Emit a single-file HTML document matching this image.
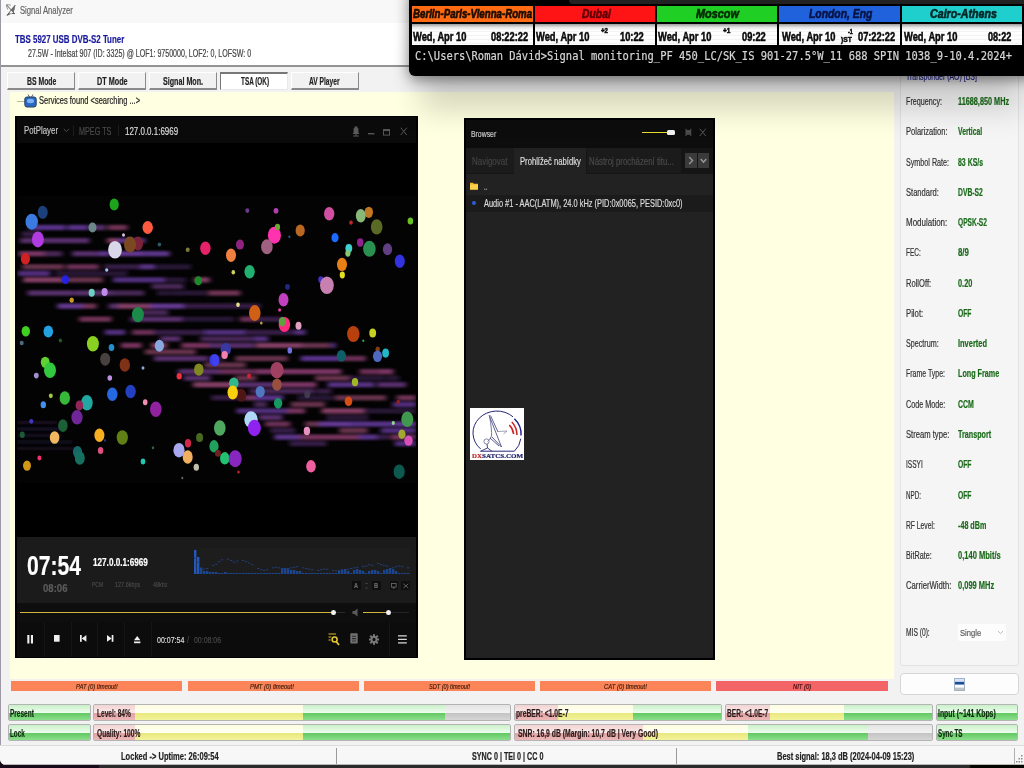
<!DOCTYPE html>
<html lang="en"><head><meta charset="utf-8"><title>Signal Analyzer</title>
<style>

*{box-sizing:border-box;margin:0;padding:0}
html,body{width:1024px;height:768px;overflow:hidden;background:#000}
body{background:linear-gradient(90deg,#170b19 0,#170b19 98px,#2b2b2b 100px,#2b2b2b 969px,#050500 971px,#050500 100%)}
body{position:relative;font-family:"Liberation Sans","DejaVu Sans",sans-serif;}
.a{position:absolute}
.t{position:absolute;white-space:nowrap;transform-origin:0 50%;display:inline-block;-webkit-text-stroke:0.2px}
#win{left:0;top:0;width:1024px;height:765px;background:#f2f2f2;border-radius:0 0 0 6px;overflow:hidden}
.tab{height:18px;top:72px;background:#f1f1f1;border:1px solid #fff;border-right-color:#8a8a8a;border-bottom:2px solid #8a8a8a}
.tab.on{background:#fff;border:1px solid #777;border-right-color:#e8e8e8;border-bottom:1px solid #e8e8e8;border-top-width:2px}
.obar{top:681px;height:10px;background:#fb8558}
.pb{height:17px;border:1px solid #b4b4b4;border-radius:2px;overflow:hidden;background:#e6e6e6}
.pb i{position:absolute;top:0;bottom:0;display:block}
.g{background:linear-gradient(#c9f1c9 0,#eefcee 52%,#63c963 56%,#8ddf8d 100%)}
.y{background:linear-gradient(#fdfde0 0,#fffff4 52%,#e9e97e 56%,#f3f39d 100%)}
.p{background:linear-gradient(#f3d3d3 0,#fbeaea 52%,#e2a2a2 56%,#ecb9b9 100%)}
.s{background:linear-gradient(#e4e4e4 0,#f2f2f2 52%,#c4c4c4 56%,#d6d6d6 100%)}

</style></head>
<body>

<div id="win" class="a">
  <div class="a" style="left:0;top:0;width:1024px;height:23px;background:#f8f8f9"></div>
  <div class="a" style="left:0;top:23px;width:1024px;height:43px;background:#fff"></div>
  <div class="a" style="left:0;top:65px;width:1024px;height:2px;background:#939393"></div>
  <div class="a" style="left:0;top:0;width:1px;height:765px;background:#9d97a6"></div>
  <!-- app icon -->
  <svg class="a" style="left:6px;top:3.5px" width="10" height="12" viewBox="0 0 10 12"><path d="M0.5 0.8 L8.8 9.8 M9.3 1 L1 11.3" stroke="#5c5c5c" stroke-width="1" fill="none"/><path d="M9.3 1 L5 5.6 L7.6 8.6 Q9 5 9.3 1Z" fill="#6a6a6a"/><path d="M0.5 0.8 Q2.5 0.5 4.8 1.2 M0.5 0.8 Q0.6 3.5 1.8 5.5" stroke="#777" stroke-width="0.8" fill="none"/><path d="M1 11.3 L4.5 9.6 M5.5 9.2 L8.8 9.8" stroke="#5c5c5c" stroke-width="1.1" fill="none"/></svg>
  <!-- tabs -->
  <div class="a tab" style="left:7.4px;width:68px"></div>
  <div class="a tab" style="left:78.4px;width:68px"></div>
  <div class="a tab" style="left:149.4px;width:68px"></div>
  <div class="a tab on" style="left:220.2px;width:68px"></div>
  <div class="a tab" style="left:291.2px;width:68px"></div>
  <!-- yellow panel -->
  <div class="a" style="left:9.5px;top:91.5px;width:884px;height:587px;background:#ffffe1"></div>
  <!-- tree icon -->
  <div class="a" style="left:17px;top:101px;width:8px;height:1px;background:#b9b9a0"></div>
  <svg class="a" style="left:24px;top:94px" width="13" height="14" viewBox="0 0 13 14"><path d="M4 0.5 L5.5 3 M9 0.5 L7.5 3" stroke="#567" stroke-width="1"/><rect x="0.8" y="3" width="11.4" height="10" rx="2.2" fill="#2a66c2" stroke="#26405f" stroke-width="1"/><ellipse cx="6.5" cy="7" rx="3.6" ry="2.2" fill="#7db4f2"/></svg>

  <!-- table status bars -->
  <div class="a obar" style="left:11px;width:171px"></div>
  <div class="a obar" style="left:187.5px;width:171px"></div>
  <div class="a obar" style="left:363.5px;width:171.5px"></div>
  <div class="a obar" style="left:540px;width:171px"></div>
  <div class="a obar" style="left:716px;width:172px;background:#f26465"></div>
<div class="a pb" style="left:8px;top:704px;width:82.5px"><i class="g" style="left:-1.0px;width:83.0px"></i></div>
<div class="a pb" style="left:8px;top:724px;width:82.5px"><i class="g" style="left:-1.0px;width:83.0px"></i></div>
<div class="a pb" style="left:93px;top:704px;width:418px"><i class="p" style="left:-1.0px;width:42.0px"></i><i class="y" style="left:41.0px;width:168.0px"></i><i class="g" style="left:209.0px;width:142.0px"></i><i class="s" style="left:351.0px;width:67.0px"></i></div>
<div class="a pb" style="left:93px;top:724px;width:418px"><i class="p" style="left:-1.0px;width:42.0px"></i><i class="y" style="left:41.0px;width:168.0px"></i><i class="g" style="left:209.0px;width:209.0px"></i></div>
<div class="a pb" style="left:514px;top:704px;width:208px"><i class="p" style="left:-1.0px;width:44.0px"></i><i class="y" style="left:43.0px;width:74.5px"></i><i class="g" style="left:117.5px;width:90.5px"></i></div>
<div class="a pb" style="left:724.5px;top:704px;width:208px"><i class="p" style="left:-1.5px;width:46.0px"></i><i class="y" style="left:44.5px;width:74.0px"></i><i class="g" style="left:118.5px;width:89.0px"></i></div>
<div class="a pb" style="left:514px;top:724px;width:418.5px"><i class="p" style="left:-1.0px;width:129.0px"></i><i class="y" style="left:128.0px;width:105.0px"></i><i class="g" style="left:233.0px;width:120.0px"></i><i class="s" style="left:353.0px;width:65.0px"></i></div>
<div class="a pb" style="left:935.5px;top:704px;width:82.5px"><i class="g" style="left:-1.5px;width:84.0px"></i></div>
<div class="a pb" style="left:935.5px;top:724px;width:82.5px"><i class="g" style="left:-1.5px;width:84.0px"></i></div>

  <!-- status bar -->
  <div class="a" style="left:0;top:745px;width:1024px;height:20px;background:#f7f7f7"></div>
  <div class="a" style="left:0;top:745px;width:1024px;height:1px;background:#dcdcdc"></div>
  <div class="a" style="left:0;top:764px;width:1024px;height:1px;background:#b8b8b8"></div>
  <div class="a" style="left:336px;top:748px;width:1px;height:16px;background:#9a9a9a"></div>
  <div class="a" style="left:676px;top:748px;width:1px;height:16px;background:#9a9a9a"></div>
  <div class="a" style="left:1014px;top:748px;width:1px;height:16px;background:#b0b0b0"></div>
  <svg class="a" style="left:1016px;top:755px" width="8" height="9" viewBox="0 0 8 9"><g fill="#8a8a8a"><rect x="5" y="0" width="1.5" height="1.5"/><rect x="2.5" y="3" width="1.5" height="1.5"/><rect x="5" y="3" width="1.5" height="1.5"/><rect x="0" y="6" width="1.5" height="1.5"/><rect x="2.5" y="6" width="1.5" height="1.5"/><rect x="5" y="6" width="1.5" height="1.5"/></g></svg>

  <div class="a" style="left:900px;top:74px;width:119px;height:592px;border:1px solid #e2e2e2;border-radius:3px;background:#f5f5f5"></div>
  <div class="a" style="left:900px;top:673px;width:119px;height:22px;border:1px solid #d6d6d6;border-radius:4px;background:#fdfdfd"></div>
  <svg class="a" style="left:954.3px;top:677.6px" width="11" height="13" viewBox="0 0 11 13"><rect x="0.5" y="0.5" width="10" height="12" fill="#fafcff" stroke="#9fb2c8"/><rect x="1" y="1" width="9" height="2.6" fill="#d5e4f6"/><rect x="1" y="3.8" width="9" height="2.2" fill="#1d4e94"/><rect x="1" y="6" width="9" height="1" fill="#6f9bd0"/><rect x="1" y="9.6" width="9" height="2.4" fill="#c2c2c2"/></svg>
  <div class="a" style="left:958px;top:624px;width:48px;height:16.5px;border-radius:2px;background:#fdfdfd"></div>
  <svg class="a" style="left:997px;top:630px" width="7" height="5" viewBox="0 0 7 5"><path d="M1 1 L3.5 3.6 L6 1" stroke="#b4b4b4" stroke-width="0.9" fill="none"/></svg>
<div class="a" id="pot" style="left:15px;top:116px;width:402.5px;height:542.3px;background:#000;overflow:hidden">
<div class="a" style="left:2px;top:1px;width:399px;height:26px;background:#0a0a0a"></div>
<svg class="a" style="left:2px;top:27px" width="399" height="393" viewBox="17 143 399 393">
<defs>
<linearGradient id="pg" x1="17" x2="415" y1="0" y2="0" gradientUnits="userSpaceOnUse">
<stop offset="0" stop-color="#4a2a50"/><stop offset=".08" stop-color="#5a3068"/><stop offset=".16" stop-color="#6a3350"/><stop offset=".24" stop-color="#553080"/>
<stop offset=".32" stop-color="#6e3058"/><stop offset=".4" stop-color="#5a3488"/><stop offset=".48" stop-color="#743458"/><stop offset=".56" stop-color="#5c3690"/>
<stop offset=".64" stop-color="#7a3560"/><stop offset=".72" stop-color="#603890"/><stop offset=".8" stop-color="#7e3868"/><stop offset=".9" stop-color="#683c98"/><stop offset="1" stop-color="#7a3a70"/>
</linearGradient>
<pattern id="ds" x="0" y="223" width="399" height="6.5" patternUnits="userSpaceOnUse"><rect x="0" y="3.2" width="399" height="3.3" fill="#040204"/><rect x="0" y="0" width="399" height="3.2" fill="#000" fill-opacity=".12"/></pattern>
<filter id="bl" x="-5%" y="-5%" width="110%" height="110%"><feGaussianBlur stdDeviation="2.6 1.1"/></filter>
<filter id="bb" x="-2%" y="-2%" width="104%" height="104%"><feGaussianBlur stdDeviation="0.45"/></filter>
<clipPath id="vc"><rect x="17" y="196" width="399" height="287"/></clipPath>
</defs>
<rect x="17" y="196" width="399" height="287" fill="#030303"/>
<g clip-path="url(#vc)">
<g filter="url(#bl)">
<rect x="29.6" y="224.9" width="36.1" height="5.2" fill="#583389"/><rect x="67.7" y="224.9" width="20.2" height="5.2" fill="#583389"/><rect x="89.4" y="224.9" width="16.0" height="5.2" fill="#562d6b"/><rect x="107.7" y="224.9" width="19.7" height="5.2" fill="#6e3154"/><rect x="21.9" y="231.5" width="18.8" height="5.2" fill="#361e44"/><rect x="20.3" y="238.0" width="35.7" height="5.2" fill="#562d6b"/><rect x="54.2" y="238.0" width="21.9" height="5.2" fill="#562d6b"/><rect x="72.8" y="238.0" width="16.6" height="5.2" fill="#562d6b"/><rect x="107.1" y="238.0" width="12.0" height="5.2" fill="#813d63"/><rect x="117.8" y="238.0" width="27.2" height="5.2" fill="#5b3589"/><rect x="18.7" y="251.1" width="29.0" height="5.2" fill="#783563"/><rect x="43.9" y="251.1" width="18.3" height="5.2" fill="#462654"/><rect x="72.2" y="251.1" width="24.7" height="5.2" fill="#562d6b"/><rect x="97.4" y="251.1" width="12.7" height="5.2" fill="#5b3589"/><rect x="112.7" y="251.1" width="32.8" height="5.2" fill="#633991"/><rect x="145.9" y="251.1" width="23.8" height="5.2" fill="#5b3589"/><rect x="22.3" y="264.2" width="41.7" height="5.2" fill="#65304c"/><rect x="66.4" y="264.2" width="32.4" height="5.2" fill="#692d54"/><rect x="104.2" y="264.2" width="39.4" height="5.2" fill="#361e44"/><rect x="140.5" y="264.2" width="15.1" height="5.2" fill="#563181"/><rect x="157.9" y="264.2" width="33.1" height="5.2" fill="#281635"/><rect x="17.7" y="270.8" width="32.4" height="5.2" fill="#512d7b"/><rect x="55.5" y="270.8" width="33.5" height="5.2" fill="#281635"/><rect x="89.1" y="270.8" width="38.2" height="5.2" fill="#281635"/><rect x="23.2" y="277.3" width="40.4" height="5.2" fill="#813d63"/><rect x="61.7" y="277.3" width="41.2" height="5.2" fill="#65304c"/><rect x="113.0" y="277.3" width="52.0" height="5.2" fill="#512d7b"/><rect x="165.7" y="277.3" width="20.5" height="5.2" fill="#281635"/><rect x="194.2" y="277.3" width="15.4" height="5.2" fill="#813d63"/><rect x="151.9" y="283.8" width="31.5" height="5.2" fill="#462654"/><rect x="27.5" y="290.4" width="46.3" height="5.2" fill="#562d6b"/><rect x="74.2" y="290.4" width="40.2" height="5.2" fill="#562d6b"/><rect x="111.7" y="290.4" width="32.4" height="5.2" fill="#462654"/><rect x="157.2" y="290.4" width="13.6" height="5.2" fill="#281635"/><rect x="171.6" y="290.4" width="34.4" height="5.2" fill="#281635"/><rect x="207.9" y="290.4" width="32.5" height="5.2" fill="#6e3154"/><rect x="57.5" y="303.5" width="25.8" height="5.2" fill="#633991"/><rect x="82.8" y="303.5" width="13.6" height="5.2" fill="#6e3154"/><rect x="108.7" y="303.5" width="13.2" height="5.2" fill="#562d6b"/><rect x="118.2" y="303.5" width="34.9" height="5.2" fill="#813d63"/><rect x="150.2" y="303.5" width="34.2" height="5.2" fill="#633991"/><rect x="183.5" y="303.5" width="49.8" height="5.2" fill="#361e44"/><rect x="230.9" y="303.5" width="29.6" height="5.2" fill="#361e44"/><rect x="138.4" y="310.0" width="29.7" height="5.2" fill="#462654"/><rect x="79.2" y="316.6" width="32.3" height="5.2" fill="#6e3154"/><rect x="130.6" y="316.6" width="51.6" height="5.2" fill="#562d6b"/><rect x="182.5" y="316.6" width="51.8" height="5.2" fill="#281635"/><rect x="239.8" y="316.6" width="18.7" height="5.2" fill="#692d54"/><rect x="257.0" y="316.6" width="25.9" height="5.2" fill="#361e44"/><rect x="104.8" y="329.7" width="20.4" height="5.2" fill="#512d7b"/><rect x="132.1" y="329.7" width="22.3" height="5.2" fill="#692d54"/><rect x="153.5" y="329.7" width="52.5" height="5.2" fill="#361e44"/><rect x="204.8" y="329.7" width="41.5" height="5.2" fill="#512d7b"/><rect x="244.7" y="329.7" width="47.3" height="5.2" fill="#361e44"/><rect x="293.3" y="329.7" width="12.3" height="5.2" fill="#512d7b"/><rect x="160.4" y="336.2" width="20.2" height="5.2" fill="#562d6b"/><rect x="200.4" y="336.2" width="51.9" height="5.2" fill="#462654"/><rect x="253.0" y="336.2" width="15.3" height="5.2" fill="#512d7b"/><rect x="121.1" y="342.8" width="20.4" height="5.2" fill="#74325b"/><rect x="151.3" y="342.8" width="15.6" height="5.2" fill="#813d63"/><rect x="181.4" y="342.8" width="29.4" height="5.2" fill="#74325b"/><rect x="209.2" y="342.8" width="44.8" height="5.2" fill="#562d6b"/><rect x="255.4" y="342.8" width="47.0" height="5.2" fill="#813d63"/><rect x="302.2" y="342.8" width="27.9" height="5.2" fill="#65304c"/><rect x="331.2" y="342.8" width="4.4" height="5.2" fill="#583389"/><rect x="144.9" y="349.3" width="50.8" height="5.2" fill="#65304c"/><rect x="154.0" y="355.9" width="53.6" height="5.2" fill="#562d6b"/><rect x="209.2" y="355.9" width="15.3" height="5.2" fill="#281635"/><rect x="235.3" y="355.9" width="52.4" height="5.2" fill="#65304c"/><rect x="300.8" y="355.9" width="37.7" height="5.2" fill="#583389"/><rect x="338.1" y="355.9" width="27.7" height="5.2" fill="#692d54"/><rect x="204.3" y="362.4" width="41.4" height="5.2" fill="#65304c"/><rect x="178.1" y="369.0" width="43.6" height="5.2" fill="#562d6b"/><rect x="219.8" y="369.0" width="33.8" height="5.2" fill="#692d54"/><rect x="254.4" y="369.0" width="36.3" height="5.2" fill="#783563"/><rect x="288.4" y="369.0" width="52.9" height="5.2" fill="#783563"/><rect x="359.5" y="369.0" width="13.7" height="5.2" fill="#692d54"/><rect x="369.4" y="369.0" width="13.6" height="5.2" fill="#692d54"/><rect x="379.6" y="369.0" width="13.7" height="5.2" fill="#783563"/><rect x="183.8" y="375.5" width="26.5" height="5.2" fill="#562d6b"/><rect x="235.0" y="375.5" width="21.2" height="5.2" fill="#65304c"/><rect x="315.1" y="375.5" width="37.0" height="5.2" fill="#65304c"/><rect x="348.7" y="375.5" width="36.3" height="5.2" fill="#281635"/><rect x="386.7" y="375.5" width="12.4" height="5.2" fill="#281635"/><rect x="193.0" y="382.1" width="44.9" height="5.2" fill="#813d63"/><rect x="236.4" y="382.1" width="43.2" height="5.2" fill="#562d6b"/><rect x="278.7" y="382.1" width="37.6" height="5.2" fill="#783563"/><rect x="327.8" y="382.1" width="46.5" height="5.2" fill="#563181"/><rect x="377.1" y="382.1" width="29.0" height="5.2" fill="#562d6b"/><rect x="249.7" y="388.6" width="49.9" height="5.2" fill="#462654"/><rect x="296.0" y="388.6" width="18.8" height="5.2" fill="#462654"/><rect x="316.5" y="388.6" width="14.8" height="5.2" fill="#361e44"/><rect x="211.3" y="395.2" width="33.2" height="5.2" fill="#361e44"/><rect x="244.8" y="395.2" width="14.0" height="5.2" fill="#783563"/><rect x="254.8" y="395.2" width="28.3" height="5.2" fill="#583389"/><rect x="297.7" y="395.2" width="34.5" height="5.2" fill="#281635"/><rect x="334.7" y="395.2" width="51.4" height="5.2" fill="#65304c"/><rect x="396.7" y="395.2" width="19.2" height="5.2" fill="#6e3154"/><rect x="254.1" y="401.8" width="12.7" height="5.2" fill="#462654"/><rect x="290.9" y="401.8" width="33.9" height="5.2" fill="#65304c"/><rect x="392.7" y="401.8" width="23.3" height="5.2" fill="#512d7b"/><rect x="236.5" y="408.3" width="53.2" height="5.2" fill="#512d7b"/><rect x="287.2" y="408.3" width="17.8" height="5.2" fill="#74325b"/><rect x="321.6" y="408.3" width="45.9" height="5.2" fill="#813d63"/><rect x="363.5" y="408.3" width="32.3" height="5.2" fill="#281635"/><rect x="394.8" y="408.3" width="21.2" height="5.2" fill="#281635"/><rect x="258.8" y="414.8" width="23.5" height="5.2" fill="#562d6b"/><rect x="326.5" y="414.8" width="41.8" height="5.2" fill="#281635"/><rect x="264.9" y="421.4" width="25.4" height="5.2" fill="#692d54"/><rect x="305.2" y="421.4" width="14.9" height="5.2" fill="#65304c"/><rect x="318.9" y="421.4" width="31.9" height="5.2" fill="#633991"/><rect x="349.9" y="421.4" width="49.1" height="5.2" fill="#583389"/><rect x="398.9" y="421.4" width="17.1" height="5.2" fill="#633991"/><rect x="270.3" y="427.9" width="24.5" height="5.2" fill="#361e44"/><rect x="339.3" y="427.9" width="28.2" height="5.2" fill="#65304c"/><rect x="380.9" y="427.9" width="35.1" height="5.2" fill="#512d7b"/><rect x="274.4" y="434.5" width="29.3" height="5.2" fill="#5b3589"/><rect x="300.4" y="434.5" width="13.4" height="5.2" fill="#6e3154"/><rect x="310.3" y="434.5" width="51.6" height="5.2" fill="#74325b"/><rect x="359.3" y="434.5" width="18.4" height="5.2" fill="#583389"/><rect x="376.6" y="434.5" width="12.7" height="5.2" fill="#361e44"/><rect x="390.8" y="434.5" width="22.5" height="5.2" fill="#74325b"/><rect x="411.6" y="434.5" width="4.4" height="5.2" fill="#562d6b"/><rect x="289.7" y="441.0" width="36.7" height="5.2" fill="#361e44"/><rect x="394.8" y="441.0" width="21.2" height="5.2" fill="#512d7b"/>
<rect x="17" y="421" width="40" height="3" fill="#1a1024"/><rect x="17" y="427.5" width="46" height="3" fill="#1c1228"/><rect x="17" y="434" width="44" height="3" fill="#181022"/><rect x="17" y="440.5" width="55" height="3" fill="#160e20"/><rect x="17" y="447" width="60" height="3" fill="#120a1a"/>
</g>
<g filter="url(#bb)"><ellipse cx="114.2" cy="204.6" rx="4.6" ry="6" fill="#1ea51e"/><ellipse cx="42.7" cy="212.3" rx="5" ry="6.5" fill="#1f3f7a"/><ellipse cx="31.7" cy="221.7" rx="6.2" ry="8" fill="#3a7ae0"/><ellipse cx="37.9" cy="239.4" rx="6" ry="8" fill="#b03ae0"/><ellipse cx="25.4" cy="258.8" rx="4.6" ry="5.8" fill="#d02020"/><ellipse cx="92.5" cy="227.5" rx="4" ry="5" fill="#6a8888"/><ellipse cx="147.7" cy="227.5" rx="5.2" ry="6.5" fill="#ff5a40"/><ellipse cx="123.5" cy="235" rx="1.5" ry="1.7" fill="#e0c0e0"/><ellipse cx="138" cy="243.5" rx="5" ry="7" fill="#7a2038"/><ellipse cx="130" cy="244.6" rx="6" ry="8" fill="#7a4a20"/><ellipse cx="115" cy="249.8" rx="6.9" ry="8.8" fill="#d8d8e8"/><ellipse cx="159.4" cy="244.6" rx="1.8" ry="2" fill="#2a5a6a"/><ellipse cx="187.7" cy="249.8" rx="2" ry="2.3" fill="#7a7a3a"/><ellipse cx="205.4" cy="248.3" rx="5.2" ry="6.7" fill="#e8206a"/><ellipse cx="106.7" cy="270" rx="1.6" ry="1.8" fill="#a0c8e8"/><ellipse cx="65.4" cy="279.6" rx="3.5" ry="4.4" fill="#2020e0"/><ellipse cx="198.3" cy="280.8" rx="3.8" ry="4.6" fill="#1a8a2a"/><ellipse cx="91.7" cy="292.7" rx="3.1" ry="4" fill="#6ad0c0"/><ellipse cx="104.6" cy="291.9" rx="3.1" ry="4" fill="#c08ae8"/><ellipse cx="71.7" cy="300.2" rx="2.2" ry="2.6" fill="#c89a20"/><ellipse cx="137.9" cy="314.6" rx="6" ry="7.7" fill="#1a8a4a"/><ellipse cx="25.8" cy="331.2" rx="4.2" ry="5.2" fill="#40d020"/><ellipse cx="48.3" cy="331.4" rx="4.8" ry="6" fill="#20a0e0"/><ellipse cx="247.3" cy="210.6" rx="2" ry="2.3" fill="#6a3a8a"/><ellipse cx="276" cy="210.8" rx="2.4" ry="2.8" fill="#b040b0"/><ellipse cx="329.2" cy="213.8" rx="5.2" ry="6.7" fill="#d050a0"/><ellipse cx="368.8" cy="212.3" rx="4.2" ry="5.6" fill="#c07820"/><ellipse cx="360.8" cy="215.8" rx="5" ry="6.7" fill="#88b878"/><ellipse cx="351" cy="222.7" rx="1.8" ry="2.1" fill="#c02828"/><ellipse cx="376.7" cy="226.9" rx="5.8" ry="7.7" fill="#5a6a28"/><ellipse cx="410.4" cy="221" rx="2.8" ry="3.5" fill="#68c020"/><ellipse cx="274.4" cy="235.2" rx="6.5" ry="8.5" fill="#ff30b0"/><ellipse cx="277.5" cy="227" rx="2.6" ry="3.2" fill="#68a830"/><ellipse cx="300.2" cy="230.6" rx="4.6" ry="6" fill="#b86820"/><ellipse cx="289.4" cy="236.7" rx="1" ry="1.2" fill="#2060a0"/><ellipse cx="335" cy="237.7" rx="3.6" ry="4.6" fill="#1a6aff"/><ellipse cx="240" cy="244.6" rx="4" ry="5" fill="#902080"/><ellipse cx="266.9" cy="246.7" rx="5.8" ry="7.5" fill="#a06080"/><ellipse cx="360.2" cy="242.5" rx="3.2" ry="4.2" fill="#902090"/><ellipse cx="348.8" cy="248.3" rx="3.4" ry="4.4" fill="#40d0d0"/><ellipse cx="347.9" cy="253.3" rx="2.6" ry="3.4" fill="#88c870"/><ellipse cx="369.4" cy="248.8" rx="6.3" ry="8" fill="#2a9050"/><ellipse cx="387.5" cy="249.2" rx="4.6" ry="6" fill="#604080"/><ellipse cx="399.8" cy="261.3" rx="5" ry="6.7" fill="#3030e0"/><ellipse cx="231" cy="255.2" rx="5" ry="6.7" fill="#f08040"/><ellipse cx="342" cy="264.4" rx="5" ry="6.7" fill="#e88018"/><ellipse cx="233.3" cy="272.3" rx="1.8" ry="2.2" fill="#d0d060"/><ellipse cx="249.6" cy="271.7" rx="5.2" ry="6.7" fill="#20b070"/><ellipse cx="342.3" cy="275" rx="2.6" ry="3.4" fill="#e0e020"/><ellipse cx="320.8" cy="279.6" rx="2.6" ry="3.4" fill="#4030c0"/><ellipse cx="326.9" cy="285.2" rx="6.9" ry="8.8" fill="#c880b0"/><ellipse cx="287.5" cy="286.9" rx="2.4" ry="2.8" fill="#202880"/><ellipse cx="283.5" cy="299.8" rx="5" ry="6.7" fill="#c040c0"/><ellipse cx="238" cy="304.8" rx="1.8" ry="2.2" fill="#e8e090"/><ellipse cx="279.6" cy="310" rx="1.5" ry="1.8" fill="#e040a0"/><ellipse cx="254.8" cy="313" rx="5.8" ry="7.9" fill="#d06018"/><ellipse cx="261.3" cy="323" rx="1.3" ry="1.6" fill="#c0a040"/><ellipse cx="284.4" cy="324.4" rx="5.8" ry="7.5" fill="#ff2a80"/><ellipse cx="282.3" cy="321.7" rx="3.5" ry="4.8" fill="#60a040"/><ellipse cx="298.5" cy="325.8" rx="3" ry="4" fill="#e0a0c0"/><ellipse cx="353.3" cy="334" rx="6.2" ry="8" fill="#b84010"/><ellipse cx="372.7" cy="333" rx="3.4" ry="4.6" fill="#c8d020"/><ellipse cx="21.7" cy="343" rx="2" ry="2.3" fill="#506880"/><ellipse cx="60.4" cy="340.4" rx="1.7" ry="2" fill="#205a28"/><ellipse cx="92.9" cy="343.8" rx="6" ry="7.7" fill="#88d020"/><ellipse cx="111.5" cy="347.5" rx="2.8" ry="3.5" fill="#2090d0"/><ellipse cx="159.4" cy="345.8" rx="4.6" ry="6" fill="#88a8e0"/><ellipse cx="105.2" cy="359.2" rx="5" ry="6.5" fill="#484040"/><ellipse cx="124.8" cy="365" rx="5.2" ry="6.7" fill="#803018"/><ellipse cx="143" cy="368" rx="1.5" ry="1.8" fill="#88a8d0"/><ellipse cx="214" cy="360.2" rx="4.6" ry="6.2" fill="#3838e0"/><ellipse cx="198.8" cy="369.6" rx="4.8" ry="6.2" fill="#808820"/><ellipse cx="179.2" cy="376.3" rx="2.6" ry="3.3" fill="#f03040"/><ellipse cx="45.2" cy="362.3" rx="4.4" ry="5.6" fill="#60d030"/><ellipse cx="50" cy="370.2" rx="6" ry="7.7" fill="#30c840"/><ellipse cx="36.3" cy="375.6" rx="2.4" ry="2.8" fill="#a090d0"/><ellipse cx="109.8" cy="378" rx="2.3" ry="2.8" fill="#c090e0"/><ellipse cx="112.3" cy="394.2" rx="5.2" ry="6.7" fill="#2868e0"/><ellipse cx="130.6" cy="391.5" rx="5.2" ry="6.7" fill="#2040c0"/><ellipse cx="50.8" cy="395.8" rx="2" ry="2.4" fill="#a0c840"/><ellipse cx="64.8" cy="398" rx="5.2" ry="6.7" fill="#38b838"/><ellipse cx="43.3" cy="404.8" rx="2.7" ry="3.5" fill="#4090f0"/><ellipse cx="86.9" cy="402.7" rx="5.8" ry="7.7" fill="#20a8a0"/><ellipse cx="79.4" cy="405.4" rx="3.8" ry="5" fill="#902858"/><ellipse cx="145.2" cy="402.3" rx="2.3" ry="3" fill="#f090b0"/><ellipse cx="155.8" cy="409.2" rx="5.8" ry="7.7" fill="#9020a0"/><ellipse cx="77" cy="417.3" rx="5.6" ry="7.3" fill="#702898"/><ellipse cx="31.3" cy="421.3" rx="2" ry="2.4" fill="#4038c0"/><ellipse cx="62.9" cy="425.6" rx="4.8" ry="6.3" fill="#1a6038"/><ellipse cx="22.3" cy="434.8" rx="2.5" ry="3.2" fill="#1a5a38"/><ellipse cx="54.6" cy="437.5" rx="4.8" ry="6.3" fill="#f0b860"/><ellipse cx="99.4" cy="435.2" rx="5" ry="6.7" fill="#f8b020"/><ellipse cx="122.3" cy="437.5" rx="5.6" ry="7.3" fill="#608018"/><ellipse cx="199.6" cy="437.5" rx="3.5" ry="4.6" fill="#486820"/><ellipse cx="188" cy="443.3" rx="3.1" ry="4.2" fill="#d02848"/><ellipse cx="214" cy="446.3" rx="4.6" ry="6.2" fill="#20a060"/><ellipse cx="179" cy="450.2" rx="5.6" ry="7.3" fill="#a8a8f0"/><ellipse cx="187.7" cy="457" rx="5" ry="6.7" fill="#f0b060"/><ellipse cx="196.3" cy="467.3" rx="2.7" ry="3.5" fill="#c0c0a8"/><ellipse cx="153" cy="447.7" rx="1.2" ry="1.5" fill="#2a6a3a"/><ellipse cx="100.6" cy="450.4" rx="2.7" ry="3.5" fill="#e05080"/><ellipse cx="77.5" cy="451.9" rx="4.6" ry="6" fill="#186868"/><ellipse cx="79.8" cy="458" rx="5" ry="6.7" fill="#187060"/><ellipse cx="39.4" cy="458" rx="2" ry="2.4" fill="#f03070"/><ellipse cx="27" cy="465.6" rx="4" ry="5.2" fill="#d09818"/><ellipse cx="143" cy="461.5" rx="2.3" ry="3" fill="#20c8b0"/><ellipse cx="182.3" cy="478" rx="1" ry="1.2" fill="#666"/><ellipse cx="105" cy="440.4" rx="1" ry="1.2" fill="#2838a0"/><ellipse cx="363.3" cy="340.8" rx="1.1" ry="1.3" fill="#30a050"/><ellipse cx="225.8" cy="349.2" rx="5.2" ry="6.2" fill="#3838a0"/><ellipse cx="224.6" cy="355" rx="3.2" ry="4" fill="#f080b0"/><ellipse cx="215.6" cy="360.2" rx="3.8" ry="6" fill="#4040f0"/><ellipse cx="289.8" cy="350.4" rx="2.3" ry="3.2" fill="#7070e0"/><ellipse cx="341.3" cy="355.8" rx="4.6" ry="5.8" fill="#106068"/><ellipse cx="377.7" cy="349.2" rx="2.2" ry="2.6" fill="#804018"/><ellipse cx="377.5" cy="356.3" rx="4.6" ry="5.8" fill="#5068c0"/><ellipse cx="385.6" cy="353.1" rx="3.4" ry="4.6" fill="#20b8c8"/><ellipse cx="277" cy="370.2" rx="6.6" ry="8.3" fill="#a04060"/><ellipse cx="276.9" cy="384.6" rx="4.8" ry="6.2" fill="#985040"/><ellipse cx="249" cy="376" rx="2" ry="2.4" fill="#d02030"/><ellipse cx="233.8" cy="383.1" rx="4.8" ry="5.5" fill="#30b888"/><ellipse cx="241" cy="395.2" rx="5.2" ry="6.5" fill="#501818"/><ellipse cx="232.7" cy="392.5" rx="5.2" ry="7" fill="#f8d010"/><ellipse cx="260.2" cy="391.7" rx="4.6" ry="5.8" fill="#5078c0"/><ellipse cx="278.1" cy="403.3" rx="4.2" ry="5.4" fill="#189860"/><ellipse cx="355" cy="382.1" rx="3.2" ry="4.2" fill="#a0b828"/><ellipse cx="348.5" cy="401.3" rx="3.8" ry="4.8" fill="#d85018"/><ellipse cx="307.3" cy="394.2" rx="3" ry="4" fill="#403850"/><ellipse cx="398.3" cy="402" rx="1.8" ry="2.2" fill="#902020"/><ellipse cx="407.3" cy="419.2" rx="6" ry="7.7" fill="#409850"/><ellipse cx="393.3" cy="423.1" rx="1.6" ry="2" fill="#90d890"/><ellipse cx="401.9" cy="434.2" rx="3.6" ry="4.8" fill="#a0a830"/><ellipse cx="408.5" cy="440.6" rx="4.2" ry="5.2" fill="#d850b8"/><ellipse cx="251" cy="419.6" rx="6.7" ry="8.3" fill="#b0d8f8"/><ellipse cx="254.4" cy="428" rx="6.5" ry="8.3" fill="#9020f0"/><ellipse cx="219.8" cy="428" rx="5.8" ry="7.7" fill="#50a860"/><ellipse cx="306.9" cy="431" rx="3.2" ry="4.2" fill="#e890c0"/><ellipse cx="218" cy="453.3" rx="3" ry="3.5" fill="#702020"/><ellipse cx="224.8" cy="458.3" rx="4.8" ry="6.2" fill="#20c070"/><ellipse cx="235.2" cy="458.8" rx="6.5" ry="8.5" fill="#8828c0"/><ellipse cx="238.5" cy="472" rx="1.3" ry="1.6" fill="#c02020"/><ellipse cx="311" cy="466.3" rx="4.8" ry="6.2" fill="#f060a0"/><ellipse cx="399.2" cy="471.7" rx="5.6" ry="7.3" fill="#085850"/></g>
</g></svg>
<div class="a" style="left:2px;top:421px;width:399px;height:66px;background:#1b1b1b"></div>
<div class="a" style="left:2px;top:487px;width:399px;height:19px;background:#0e0e0e"></div>
<div class="a" style="left:2px;top:506px;width:399px;height:34.6px;background:#0c0c0c"></div>
<div class="a" style="left:28.8px;top:506px;width:1px;height:35px;background:#151515"></div>
<div class="a" style="left:55.5px;top:506px;width:1px;height:35px;background:#151515"></div>
<div class="a" style="left:82.0px;top:506px;width:1px;height:35px;background:#151515"></div>
<div class="a" style="left:108.8px;top:506px;width:1px;height:35px;background:#151515"></div>
<div class="a" style="left:135.5px;top:506px;width:1px;height:35px;background:#151515"></div>
<div class="a" style="left:373.9px;top:506px;width:1px;height:35px;background:#151515"></div>
<div class="a" style="left:5px;top:495.5px;width:313px;height:1.6px;background:#d2b440"></div>
<div class="a" style="left:318px;top:495.5px;width:12px;height:1.6px;background:#2a2a2a"></div>
<div class="a" style="left:315.5px;top:493.6px;width:5.2px;height:5.6px;border-radius:50%;background:#f4f4f4"></div>
<div class="a" style="left:348px;top:495.5px;width:25px;height:1.6px;background:#d2b440"></div>
<div class="a" style="left:373px;top:495.5px;width:20.5px;height:1.6px;background:#242424"></div>
<div class="a" style="left:370.7px;top:493.6px;width:5.2px;height:5.6px;border-radius:50%;background:#f4f4f4"></div>
<svg class="a" style="left:336.5px;top:492px" width="7" height="9" viewBox="0 0 7 9"><path d="M0.5 3 H2.5 L5.5 0.5 V8.5 L2.5 6 H0.5 Z" fill="#5a5a5a"/></svg>
<svg class="a" style="left:337px;top:9.599999999999994px" width="8" height="11" viewBox="0 0 8 11"><path d="M2.6 0.6 H5.4 V2.2 H6.4 V6.6 L7.5 8 H0.5 L1.6 6.6 V2.2 H2.6 Z M3.5 8 H4.5 V9.6 H3.5 Z M1.2 9.6 H6.8 V10.5 H1.2 Z" fill="#5a5a5a"/></svg>
<svg class="a" style="left:353px;top:17px" width="7" height="2" viewBox="0 0 7 2"><rect x="0" y="0" width="6.5" height="1.4" fill="#555"/></svg>
<svg class="a" style="left:368px;top:13px" width="7" height="7" viewBox="0 0 7 7"><rect x="0.5" y="0.5" width="6" height="5.6" fill="none" stroke="#555"/><rect x="0.5" y="0.5" width="6" height="1.6" fill="#555"/></svg>
<svg class="a" style="left:385px;top:10.5px" width="8" height="9" viewBox="0 0 8 9"><path d="M0.7 0.7 L6.8 8 M6.8 0.7 L0.7 8" stroke="#555" stroke-width="1"/></svg>
<svg class="a" style="left:48px;top:12px" width="7" height="5" viewBox="0 0 7 5"><path d="M0.8 0.8 L3.4 3.6 L6 0.8" stroke="#555" stroke-width="0.9" fill="none"/></svg>
<div class="a" style="left:58px;top:9px;width:1px;height:11px;background:#1c1c1c"></div><div class="a" style="left:102.5px;top:9px;width:1px;height:11px;background:#1c1c1c"></div>
<svg class="a" style="left:11.600000000000001px;top:518.5px" width="7" height="9" viewBox="0 0 7 9"><rect x="0.3" y="0" width="2.1" height="8.5" fill="#f0f0f0"/><rect x="3.9" y="0" width="2.1" height="8.5" fill="#f0f0f0"/></svg>
<svg class="a" style="left:38.6px;top:519.4px" width="6" height="7" viewBox="0 0 6 7"><rect x="0" y="0" width="5.6" height="6.7" fill="#f0f0f0"/></svg>
<svg class="a" style="left:65px;top:519.2px" width="7" height="7" viewBox="0 0 7 7"><rect x="0" y="0" width="1.7" height="6.8" fill="#f0f0f0"/><path d="M6.4 0 V6.8 L1.7 3.4 Z" fill="#f0f0f0"/></svg>
<svg class="a" style="left:91.7px;top:519.2px" width="7" height="7" viewBox="0 0 7 7"><rect x="4.7" y="0" width="1.7" height="6.8" fill="#f0f0f0"/><path d="M0 0 V6.8 L4.7 3.4 Z" fill="#f0f0f0"/></svg>
<svg class="a" style="left:118.6px;top:519.5px" width="7" height="8" viewBox="0 0 7 8"><path d="M3.2 0 L6.4 4.3 H0 Z" fill="#f0f0f0"/><rect x="0" y="5.5" width="6.4" height="1.7" fill="#f0f0f0"/></svg>
<svg class="a" style="left:312.5px;top:516.5px" width="12" height="13" viewBox="0 0 12 13"><path d="M0.5 1 H8 M0.5 4 H3.2 M0.5 7 H2.6" stroke="#d9b92e" stroke-width="1.2"/><circle cx="6.6" cy="6.6" r="2.5" fill="none" stroke="#e8c930" stroke-width="1.5"/><path d="M8.4 8.8 L11 12" stroke="#e8c930" stroke-width="1.8"/></svg>
<svg class="a" style="left:335px;top:517.3px" width="8" height="11" viewBox="0 0 8 11"><rect x="0.3" y="0.3" width="7.4" height="10.2" rx="0.8" fill="#707070"/><path d="M2 3.2 H6 M2 5.6 H6" stroke="#2a2a2a" stroke-width="1.1"/><rect x="2" y="7.2" width="4" height="1.6" fill="#4a4a4a"/></svg>
<svg class="a" style="left:353.8px;top:517.5px" width="10" height="11" viewBox="0 0 10 11"><g transform="translate(5 5.5)"><g fill="#7a7a7a"><rect x="-1" y="-5.3" width="2" height="10.6"/><rect x="-1" y="-5.3" width="2" height="10.6" transform="rotate(45)"/><rect x="-1" y="-5.3" width="2" height="10.6" transform="rotate(90)"/><rect x="-1" y="-5.3" width="2" height="10.6" transform="rotate(135)"/></g><ellipse rx="3.3" ry="3.6" fill="#7a7a7a"/><ellipse rx="1.5" ry="1.7" fill="#0c0c0c"/></g></svg>
<svg class="a" style="left:383px;top:519px" width="9" height="9" viewBox="0 0 9 9"><path d="M0 0.8 H8.8 M0 4.3 H8.8 M0 7.8 H8.8" stroke="#d8d8d8" stroke-width="1.3"/></svg>
<div class="a" style="left:337px;top:465.29999999999995px;width:8.8px;height:9px;background:#0f0f0f;border-radius:1px"></div>
<div class="a" style="left:357px;top:465.29999999999995px;width:8.8px;height:9px;background:#0f0f0f;border-radius:1px"></div>
<div class="a" style="left:374.6px;top:465.29999999999995px;width:8.8px;height:9px;background:#0f0f0f;border-radius:1px"></div>
<div class="a" style="left:386px;top:465.29999999999995px;width:8.8px;height:9px;background:#0f0f0f;border-radius:1px"></div>
<svg class="a" style="left:349px;top:466px" width="5" height="8" viewBox="0 0 5 8"><path d="M1 1.5 H4 M1 6 H4" stroke="#3a3a3a" stroke-width="1"/></svg>
<svg class="a" style="left:375.5px;top:467px" width="6" height="6" viewBox="0 0 6 6"><rect x="0.5" y="0.5" width="4.6" height="3.6" fill="none" stroke="#666" stroke-width="0.9"/><path d="M1.4 5.4 L2.8 3.6 L4.2 5.4Z" fill="#666"/></svg>
<svg class="a" style="left:387.5px;top:467px" width="6" height="6" viewBox="0 0 6 6"><path d="M0.3 0.8 L5.3 5 M5.3 0.8 L0.3 5" stroke="#666" stroke-width="0.9"/></svg>
<svg class="a" style="left:178.5px;top:432.0px" width="216" height="27" viewBox="0 0 216 27"><rect x="0" y="0" width="216" height="26.5" fill="#1d1d1d"/><rect x="0.0" y="2" width="2.4" height="24" fill="#2458b8"/><rect x="0.0" y="9.5" width="2.4" height="0.9" fill="#21407c"/><rect x="3.0" y="9" width="2.4" height="17" fill="#2458b8"/><rect x="3.0" y="13.8" width="2.4" height="0.9" fill="#21407c"/><rect x="6.0" y="20" width="2.4" height="6" fill="#1c4590"/><rect x="6.0" y="19.4" width="2.4" height="0.9" fill="#21407c"/><rect x="9.0" y="23" width="2.4" height="3" fill="#1c4590"/><rect x="9.0" y="20.7" width="2.4" height="0.9" fill="#21407c"/><rect x="12.0" y="23" width="2.4" height="3" fill="#1c4590"/><rect x="12.0" y="20.0" width="2.4" height="0.9" fill="#21407c"/><rect x="15.0" y="24" width="2.4" height="2" fill="#1c4590"/><rect x="18.0" y="24" width="2.4" height="2" fill="#1c4590"/><rect x="18.0" y="16.9" width="2.4" height="0.9" fill="#21407c"/><rect x="21.0" y="24" width="2.4" height="2" fill="#1c4590"/><rect x="21.0" y="15.7" width="2.4" height="0.9" fill="#21407c"/><rect x="24.0" y="25" width="2.4" height="1" fill="#1c4590"/><rect x="24.0" y="13.2" width="2.4" height="0.9" fill="#21407c"/><rect x="27.0" y="25" width="2.4" height="1" fill="#1c4590"/><rect x="27.0" y="11.4" width="2.4" height="0.9" fill="#21407c"/><rect x="30.0" y="24" width="2.4" height="2" fill="#1c4590"/><rect x="33.0" y="25" width="2.4" height="1" fill="#1c4590"/><rect x="33.0" y="10.7" width="2.4" height="0.9" fill="#21407c"/><rect x="36.0" y="25" width="2.4" height="1" fill="#1c4590"/><rect x="36.0" y="12.0" width="2.4" height="0.9" fill="#21407c"/><rect x="39.0" y="25" width="2.4" height="1" fill="#1c4590"/><rect x="39.0" y="13.8" width="2.4" height="0.9" fill="#21407c"/><rect x="42.0" y="25" width="2.4" height="1" fill="#1c4590"/><rect x="42.0" y="12.6" width="2.4" height="0.9" fill="#21407c"/><rect x="45.0" y="25" width="2.4" height="1" fill="#1c4590"/><rect x="48.0" y="25" width="2.4" height="1" fill="#1c4590"/><rect x="48.0" y="12.0" width="2.4" height="0.9" fill="#21407c"/><rect x="51.0" y="25" width="2.4" height="1" fill="#1c4590"/><rect x="51.0" y="13.2" width="2.4" height="0.9" fill="#21407c"/><rect x="54.0" y="25" width="2.4" height="1" fill="#1c4590"/><rect x="54.0" y="14.5" width="2.4" height="0.9" fill="#21407c"/><rect x="57.0" y="25" width="2.4" height="1" fill="#1c4590"/><rect x="57.0" y="16.3" width="2.4" height="0.9" fill="#21407c"/><rect x="60.0" y="25" width="2.4" height="1" fill="#1c4590"/><rect x="63.0" y="25" width="2.4" height="1" fill="#1c4590"/><rect x="63.0" y="20.0" width="2.4" height="0.9" fill="#21407c"/><rect x="66.0" y="25" width="2.4" height="1" fill="#1c4590"/><rect x="66.0" y="21.3" width="2.4" height="0.9" fill="#21407c"/><rect x="69.0" y="25" width="2.4" height="1" fill="#1c4590"/><rect x="69.0" y="21.9" width="2.4" height="0.9" fill="#21407c"/><rect x="72.0" y="25" width="2.4" height="1" fill="#1c4590"/><rect x="72.0" y="21.3" width="2.4" height="0.9" fill="#21407c"/><rect x="75.0" y="25" width="2.4" height="1" fill="#1c4590"/><rect x="78.0" y="25" width="2.4" height="1" fill="#1c4590"/><rect x="78.0" y="19.4" width="2.4" height="0.9" fill="#21407c"/><rect x="81.0" y="25" width="2.4" height="1" fill="#1c4590"/><rect x="81.0" y="18.8" width="2.4" height="0.9" fill="#21407c"/><rect x="84.0" y="25" width="2.4" height="1" fill="#1c4590"/><rect x="84.0" y="19.4" width="2.4" height="0.9" fill="#21407c"/><rect x="87.0" y="20" width="2.4" height="6" fill="#1c4590"/><rect x="87.0" y="20.0" width="2.4" height="0.9" fill="#21407c"/><rect x="90.0" y="20" width="2.4" height="6" fill="#1c4590"/><rect x="93.0" y="21" width="2.4" height="5" fill="#1c4590"/><rect x="93.0" y="20.0" width="2.4" height="0.9" fill="#21407c"/><rect x="96.0" y="22" width="2.4" height="4" fill="#1c4590"/><rect x="96.0" y="19.4" width="2.4" height="0.9" fill="#21407c"/><rect x="99.0" y="22" width="2.4" height="4" fill="#1c4590"/><rect x="99.0" y="18.8" width="2.4" height="0.9" fill="#21407c"/><rect x="102.0" y="23" width="2.4" height="3" fill="#1c4590"/><rect x="102.0" y="18.2" width="2.4" height="0.9" fill="#21407c"/><rect x="105.0" y="23" width="2.4" height="3" fill="#1c4590"/><rect x="108.0" y="25" width="2.4" height="1" fill="#1c4590"/><rect x="108.0" y="19.4" width="2.4" height="0.9" fill="#21407c"/><rect x="111.0" y="25" width="2.4" height="1" fill="#1c4590"/><rect x="111.0" y="20.0" width="2.4" height="0.9" fill="#21407c"/><rect x="114.0" y="25" width="2.4" height="1" fill="#1c4590"/><rect x="114.0" y="20.7" width="2.4" height="0.9" fill="#21407c"/><rect x="117.0" y="25" width="2.4" height="1" fill="#1c4590"/><rect x="117.0" y="21.3" width="2.4" height="0.9" fill="#21407c"/><rect x="120.0" y="25" width="2.4" height="1" fill="#1c4590"/><rect x="123.0" y="25" width="2.4" height="1" fill="#1c4590"/><rect x="123.0" y="21.9" width="2.4" height="0.9" fill="#21407c"/><rect x="126.0" y="25" width="2.4" height="1" fill="#1c4590"/><rect x="126.0" y="21.3" width="2.4" height="0.9" fill="#21407c"/><rect x="129.0" y="25" width="2.4" height="1" fill="#1c4590"/><rect x="129.0" y="20.7" width="2.4" height="0.9" fill="#21407c"/><rect x="132.0" y="25" width="2.4" height="1" fill="#1c4590"/><rect x="132.0" y="20.7" width="2.4" height="0.9" fill="#21407c"/><rect x="135.0" y="25" width="2.4" height="1" fill="#1c4590"/><rect x="138.0" y="25" width="2.4" height="1" fill="#1c4590"/><rect x="138.0" y="21.9" width="2.4" height="0.9" fill="#21407c"/><rect x="141.0" y="25" width="2.4" height="1" fill="#1c4590"/><rect x="141.0" y="22.5" width="2.4" height="0.9" fill="#21407c"/><rect x="144.0" y="23" width="2.4" height="3" fill="#1c4590"/><rect x="144.0" y="21.9" width="2.4" height="0.9" fill="#21407c"/><rect x="147.0" y="22" width="2.4" height="4" fill="#1c4590"/><rect x="147.0" y="21.3" width="2.4" height="0.9" fill="#21407c"/><rect x="150.0" y="21" width="2.4" height="5" fill="#1c4590"/><rect x="153.0" y="23" width="2.4" height="3" fill="#1c4590"/><rect x="153.0" y="20.7" width="2.4" height="0.9" fill="#21407c"/><rect x="156.0" y="25" width="2.4" height="1" fill="#1c4590"/><rect x="156.0" y="20.0" width="2.4" height="0.9" fill="#21407c"/><rect x="159.0" y="22" width="2.4" height="4" fill="#1c4590"/><rect x="159.0" y="19.4" width="2.4" height="0.9" fill="#21407c"/><rect x="162.0" y="21" width="2.4" height="5" fill="#1c4590"/><rect x="162.0" y="18.8" width="2.4" height="0.9" fill="#21407c"/><rect x="165.0" y="22" width="2.4" height="4" fill="#1c4590"/><rect x="168.0" y="23" width="2.4" height="3" fill="#1c4590"/><rect x="168.0" y="18.2" width="2.4" height="0.9" fill="#21407c"/><rect x="171.0" y="25" width="2.4" height="1" fill="#1c4590"/><rect x="171.0" y="17.6" width="2.4" height="0.9" fill="#21407c"/><rect x="174.0" y="23" width="2.4" height="3" fill="#1c4590"/><rect x="174.0" y="16.3" width="2.4" height="0.9" fill="#21407c"/><rect x="177.0" y="22" width="2.4" height="4" fill="#1c4590"/><rect x="177.0" y="16.9" width="2.4" height="0.9" fill="#21407c"/><rect x="180.0" y="22" width="2.4" height="4" fill="#1c4590"/><rect x="183.0" y="23" width="2.4" height="3" fill="#1c4590"/><rect x="183.0" y="15.1" width="2.4" height="0.9" fill="#21407c"/><rect x="186.0" y="25" width="2.4" height="1" fill="#1c4590"/><rect x="186.0" y="16.3" width="2.4" height="0.9" fill="#21407c"/><rect x="189.0" y="22" width="2.4" height="4" fill="#1c4590"/><rect x="189.0" y="16.9" width="2.4" height="0.9" fill="#21407c"/><rect x="192.0" y="21" width="2.4" height="5" fill="#1c4590"/><rect x="192.0" y="17.6" width="2.4" height="0.9" fill="#21407c"/><rect x="195.0" y="20" width="2.4" height="6" fill="#1c4590"/><rect x="198.0" y="21" width="2.4" height="5" fill="#1c4590"/><rect x="198.0" y="19.4" width="2.4" height="0.9" fill="#21407c"/><rect x="201.0" y="23" width="2.4" height="3" fill="#1c4590"/><rect x="201.0" y="18.2" width="2.4" height="0.9" fill="#21407c"/><rect x="204.0" y="25" width="2.4" height="1" fill="#1c4590"/><rect x="204.0" y="17.6" width="2.4" height="0.9" fill="#21407c"/><rect x="207.0" y="25" width="2.4" height="1" fill="#1c4590"/><rect x="207.0" y="18.2" width="2.4" height="0.9" fill="#21407c"/><rect x="210.0" y="25" width="2.4" height="1" fill="#1c4590"/><rect x="213.0" y="25" width="2.4" height="1" fill="#1c4590"/><rect x="213.0" y="19.4" width="2.4" height="0.9" fill="#21407c"/></svg>
</div>
<div class="a" id="brw" style="left:464px;top:118px;width:251px;height:542px;background:#000;overflow:hidden">
<div class="a" style="left:2px;top:2px;width:247px;height:28px;background:#0d0d0d"></div>
<div class="a" style="left:2px;top:30px;width:247px;height:26px;background:#151515"></div>
<div class="a" style="left:2px;top:56px;width:247px;height:484px;background:#222"></div>
<div class="a" style="left:2px;top:30px;width:48px;height:25px;background:#1b1b1b"></div>
<div class="a" style="left:50px;top:30px;width:72px;height:27px;background:#222"></div>
<div class="a" style="left:123px;top:30px;width:94px;height:25px;background:#1b1b1b"></div>
<div class="a" style="left:221px;top:35px;width:11.5px;height:15px;background:#3a3a3a"></div>
<div class="a" style="left:233.5px;top:35px;width:11.5px;height:15px;background:#3a3a3a"></div>
<svg class="a" style="left:224px;top:38px" width="6" height="9" viewBox="0 0 6 9"><path d="M1.2 1 L4.6 4.5 L1.2 8" stroke="#9a9a9a" stroke-width="1.3" fill="none"/></svg>
<svg class="a" style="left:236px;top:40px" width="7" height="6" viewBox="0 0 7 6"><path d="M0.8 1 L3.5 4.2 L6.2 1" stroke="#9a9a9a" stroke-width="1.4" fill="none"/></svg>
<div class="a" style="left:2px;top:77px;width:247px;height:17px;background:#1b1b1b"></div>
<div class="a" style="left:178px;top:13.6px;width:26px;height:1.6px;background:#e6dc30"></div>
<div class="a" style="left:203px;top:12px;width:7.5px;height:4.6px;border-radius:1.5px;background:#f2f2f2"></div>
<svg class="a" style="left:221px;top:10px" width="7" height="9" viewBox="0 0 7 9"><path d="M0.5 0.8 H1.6 V2 H5.2 V0.8 H6.3 V8 H5.2 V6.8 H1.6 V8 H0.5 Z" fill="#4c4c4c"/></svg>
<svg class="a" style="left:235px;top:10px" width="8" height="9" viewBox="0 0 8 9"><path d="M0.7 0.7 L6.8 8 M6.8 0.7 L0.7 8" stroke="#555" stroke-width="1"/></svg>
<svg class="a" style="left:6px;top:63.5px" width="8" height="8" viewBox="0 0 8 8"><path d="M0 0.8 H3 L3.8 1.8 H8 V7.6 H0 Z" fill="#f2b632"/><rect x="0" y="2.6" width="8" height="5" fill="#fbd04a"/></svg>
<div class="a" style="left:8.4px;top:83px;width:3.6px;height:4.2px;border-radius:50%;background:#2a5ad8"></div>
<svg class="a" style="left:6px;top:290px" width="54" height="52" viewBox="0 0 54 52">
<rect width="54" height="52" fill="#fff"/>
<path d="M10.7 41 A23.8 21.8 0 0 1 43 8.8 M50.8 30.7 A23.8 21.8 0 0 1 44.4 43.2 H10.5" fill="none" stroke="#26267a" stroke-width="1"/>
<path d="M44.4 10.7 A23.8 21.8 0 0 1 51 27.5" fill="none" stroke="#1c1c8a" stroke-width="1.4"/>
<path d="M41.8 14 A19 19 0 0 1 47 27" fill="none" stroke="#cc2222" stroke-width="1.5"/>
<path d="M39.3 17 A15 15 0 0 1 43.6 26" fill="none" stroke="#cc2222" stroke-width="1.6"/>
<path d="M19 7 L31.5 39 M20.5 7.5 L28 24" stroke="#3c3c78" stroke-width="0.8" fill="none"/>
<path d="M19.5 8 Q22 22 21.5 28 Q20 32 17.5 33.5" stroke="#55558a" stroke-width="0.8" fill="none"/>
<path d="M28 23.5 L37 23 L33.5 26" stroke="#8a8aa8" stroke-width="0.8" fill="none"/>
<path d="M20 30 L29 38 M22 29 L31.5 39" stroke="#33336e" stroke-width="0.8" fill="none"/>
<circle cx="16.5" cy="33.5" r="2.6" fill="none" stroke="#77779c" stroke-width="0.9"/>
<path d="M17 36 L17.5 40 L10.5 43.2 M17.5 40 L22 43.2" stroke="#33336e" stroke-width="0.9" fill="none"/>
</svg>
</div>
<span class="t" id="t0" style='left:19.7px;top:3.0px;font-size:10.5px;line-height:15px;color:#626262;transform:scaleX(0.729);'>Signal Analyzer</span>
<span class="t" id="t1" style='left:15.3px;top:31.5px;font-size:10.5px;line-height:15px;color:#1a1a9c;font-weight:bold;transform:scaleX(0.753);'>TBS 5927 USB DVB-S2 Tuner</span>
<span class="t" id="t2" style='left:28px;top:47.0px;font-size:10px;line-height:14px;color:#444;transform:scaleX(0.707);'>27.5W - Intelsat 907 (ID: 3325) @ LOF1: 9750000, LOF2: 0, LOFSW: 0</span>
<span class="t" id="t3" style='left:27.3px;top:74.9px;font-size:10px;line-height:14px;color:#222;font-weight:bold;transform:scaleX(0.686);'>BS Mode</span>
<span class="t" id="t4" style='left:97.3px;top:74.9px;font-size:10px;line-height:14px;color:#222;font-weight:bold;transform:scaleX(0.726);'>DT Mode</span>
<span class="t" id="t5" style='left:162.8px;top:74.9px;font-size:10px;line-height:14px;color:#222;font-weight:bold;transform:scaleX(0.714);'>Signal Mon.</span>
<span class="t" id="t6" style='left:241px;top:75.2px;font-size:10px;line-height:14px;color:#222;font-weight:bold;transform:scaleX(0.636);'>TSA (OK)</span>
<span class="t" id="t7" style='left:309.3px;top:74.9px;font-size:10px;line-height:14px;color:#222;font-weight:bold;transform:scaleX(0.663);'>AV Player</span>
<span class="t" id="t8" style='left:39.4px;top:94.4px;font-size:10px;line-height:14px;color:#222;transform:scaleX(0.748);'>Services found &lt;searching ...&gt;</span>
<span class="t" id="t9" style='left:75.7px;top:681.0px;font-size:7.5px;line-height:11px;color:#3e1c0a;font-style:italic;transform:scaleX(0.778);'>PAT (0) timeout!</span>
<span class="t" id="t10" style='left:250px;top:681.0px;font-size:7.5px;line-height:11px;color:#3e1c0a;font-style:italic;transform:scaleX(0.786);'>PMT (0) timeout!</span>
<span class="t" id="t11" style='left:428.5px;top:681.0px;font-size:7.5px;line-height:11px;color:#3e1c0a;font-style:italic;transform:scaleX(0.745);'>SDT (0) timeout!</span>
<span class="t" id="t12" style='left:604px;top:681.0px;font-size:7.5px;line-height:11px;color:#3e1c0a;font-style:italic;transform:scaleX(0.787);'>CAT (0) timeout!</span>
<span class="t" id="t13" style='left:793px;top:681.0px;font-size:7.5px;line-height:11px;color:#3e0e0e;font-style:italic;transform:scaleX(0.783);'>NIT (0)</span>
<span class="t" id="t14" style='left:9.7px;top:707.1px;font-size:10px;line-height:14px;color:#0c2a0c;font-weight:bold;transform:scaleX(0.649);'>Present</span>
<span class="t" id="t15" style='left:9.7px;top:726.8px;font-size:10px;line-height:14px;color:#0c2a0c;font-weight:bold;transform:scaleX(0.630);'>Lock</span>
<span class="t" id="t16" style='left:97px;top:707.1px;font-size:10px;line-height:14px;color:#2a1a1a;font-weight:bold;transform:scaleX(0.654);'>Level: 84%</span>
<span class="t" id="t17" style='left:97px;top:726.8px;font-size:10px;line-height:14px;color:#2a1a1a;font-weight:bold;transform:scaleX(0.661);'>Quality: 100%</span>
<span class="t" id="t18" style='left:515.7px;top:707.1px;font-size:10px;line-height:14px;color:#2a1a1a;font-weight:bold;transform:scaleX(0.673);'>preBER: &lt;1.0E-7</span>
<span class="t" id="t19" style='left:726.5px;top:707.1px;font-size:10px;line-height:14px;color:#2a1a1a;font-weight:bold;transform:scaleX(0.659);'>BER: &lt;1.0E-7</span>
<span class="t" id="t20" style='left:518px;top:726.8px;font-size:10px;line-height:14px;color:#2a1a1a;font-weight:bold;transform:scaleX(0.683);'>SNR: 16,9 dB (Margin: 10,7 dB | Very Good)</span>
<span class="t" id="t21" style='left:937.5px;top:707.1px;font-size:10px;line-height:14px;color:#0c2a0c;font-weight:bold;transform:scaleX(0.685);'>Input (~141 Kbps)</span>
<span class="t" id="t22" style='left:937.5px;top:726.8px;font-size:10px;line-height:14px;color:#0c2a0c;font-weight:bold;transform:scaleX(0.621);'>Sync TS</span>
<span class="t" id="t23" style='left:120.5px;top:748.5px;font-size:10.5px;line-height:15px;color:#222;font-weight:bold;transform:scaleX(0.717);'>Locked -&gt; Uptime: 26:09:54</span>
<span class="t" id="t24" style='left:472px;top:748.5px;font-size:10.5px;line-height:15px;color:#222;font-weight:bold;transform:scaleX(0.683);'>SYNC 0 | TEI 0 | CC 0</span>
<span class="t" id="t25" style='left:776.7px;top:748.5px;font-size:10.5px;line-height:15px;color:#222;font-weight:bold;transform:scaleX(0.711);'>Best signal: 18,3 dB (2024-04-09 15:23)</span>
<span class="t" id="t26" style='left:906px;top:70.0px;font-size:10px;line-height:14px;color:#2a2a9a;transform:scaleX(0.696);'>Transponder (AO) [BS]</span>
<span class="t" id="t27" style='left:906px;top:95.0px;font-size:10px;line-height:14px;color:#333;transform:scaleX(0.720);'>Frequency:</span>
<span class="t" id="t28" style='left:958px;top:95.0px;font-size:10px;line-height:14px;color:#1a6a1a;font-weight:bold;transform:scaleX(0.729);'>11688,850 MHz</span>
<span class="t" id="t29" style='left:906px;top:125.3px;font-size:10px;line-height:14px;color:#333;transform:scaleX(0.755);'>Polarization:</span>
<span class="t" id="t30" style='left:958px;top:125.3px;font-size:10px;line-height:14px;color:#1a6a1a;font-weight:bold;transform:scaleX(0.681);'>Vertical</span>
<span class="t" id="t31" style='left:906px;top:155.5px;font-size:10px;line-height:14px;color:#333;transform:scaleX(0.717);'>Symbol Rate:</span>
<span class="t" id="t32" style='left:958px;top:155.5px;font-size:10px;line-height:14px;color:#1a6a1a;font-weight:bold;transform:scaleX(0.694);'>83 KS/s</span>
<span class="t" id="t33" style='left:906px;top:185.8px;font-size:10px;line-height:14px;color:#333;transform:scaleX(0.756);'>Standard:</span>
<span class="t" id="t34" style='left:958px;top:185.8px;font-size:10px;line-height:14px;color:#1a6a1a;font-weight:bold;transform:scaleX(0.676);'>DVB-S2</span>
<span class="t" id="t35" style='left:906px;top:216.1px;font-size:10px;line-height:14px;color:#333;transform:scaleX(0.798);'>Modulation:</span>
<span class="t" id="t36" style='left:958px;top:216.1px;font-size:10px;line-height:14px;color:#1a6a1a;font-weight:bold;transform:scaleX(0.659);'>QPSK-S2</span>
<span class="t" id="t37" style='left:906px;top:246.3px;font-size:10px;line-height:14px;color:#333;transform:scaleX(0.652);'>FEC:</span>
<span class="t" id="t38" style='left:958px;top:246.3px;font-size:10px;line-height:14px;color:#1a6a1a;font-weight:bold;transform:scaleX(0.786);'>8/9</span>
<span class="t" id="t39" style='left:906px;top:276.6px;font-size:10px;line-height:14px;color:#333;transform:scaleX(0.758);'>RollOff:</span>
<span class="t" id="t40" style='left:958px;top:276.6px;font-size:10px;line-height:14px;color:#1a6a1a;font-weight:bold;transform:scaleX(0.737);'>0.20</span>
<span class="t" id="t41" style='left:906px;top:306.9px;font-size:10px;line-height:14px;color:#333;transform:scaleX(0.773);'>Pilot:</span>
<span class="t" id="t42" style='left:958px;top:306.9px;font-size:10px;line-height:14px;color:#1a6a1a;font-weight:bold;transform:scaleX(0.675);'>OFF</span>
<span class="t" id="t43" style='left:906px;top:337.2px;font-size:10px;line-height:14px;color:#333;transform:scaleX(0.717);'>Spectrum:</span>
<span class="t" id="t44" style='left:958px;top:337.2px;font-size:10px;line-height:14px;color:#1a6a1a;font-weight:bold;transform:scaleX(0.744);'>Inverted</span>
<span class="t" id="t45" style='left:906px;top:367.4px;font-size:10px;line-height:14px;color:#333;transform:scaleX(0.696);'>Frame Type:</span>
<span class="t" id="t46" style='left:958px;top:367.4px;font-size:10px;line-height:14px;color:#1a6a1a;font-weight:bold;transform:scaleX(0.719);'>Long Frame</span>
<span class="t" id="t47" style='left:906px;top:397.7px;font-size:10px;line-height:14px;color:#333;transform:scaleX(0.722);'>Code Mode:</span>
<span class="t" id="t48" style='left:958px;top:397.7px;font-size:10px;line-height:14px;color:#1a6a1a;font-weight:bold;transform:scaleX(0.696);'>CCM</span>
<span class="t" id="t49" style='left:906px;top:428.0px;font-size:10px;line-height:14px;color:#333;transform:scaleX(0.763);'>Stream type:</span>
<span class="t" id="t50" style='left:958px;top:428.0px;font-size:10px;line-height:14px;color:#1a6a1a;font-weight:bold;transform:scaleX(0.717);'>Transport</span>
<span class="t" id="t51" style='left:906px;top:458.2px;font-size:10px;line-height:14px;color:#333;transform:scaleX(0.654);'>ISSYI</span>
<span class="t" id="t52" style='left:958px;top:458.2px;font-size:10px;line-height:14px;color:#1a6a1a;font-weight:bold;transform:scaleX(0.675);'>OFF</span>
<span class="t" id="t53" style='left:906px;top:488.5px;font-size:10px;line-height:14px;color:#333;transform:scaleX(0.625);'>NPD:</span>
<span class="t" id="t54" style='left:958px;top:488.5px;font-size:10px;line-height:14px;color:#1a6a1a;font-weight:bold;transform:scaleX(0.675);'>OFF</span>
<span class="t" id="t55" style='left:906px;top:518.8px;font-size:10px;line-height:14px;color:#333;transform:scaleX(0.674);'>RF Level:</span>
<span class="t" id="t56" style='left:958px;top:518.8px;font-size:10px;line-height:14px;color:#1a6a1a;font-weight:bold;transform:scaleX(0.718);'>-48 dBm</span>
<span class="t" id="t57" style='left:906px;top:549.0px;font-size:10px;line-height:14px;color:#333;transform:scaleX(0.722);'>BitRate:</span>
<span class="t" id="t58" style='left:958px;top:549.0px;font-size:10px;line-height:14px;color:#1a6a1a;font-weight:bold;transform:scaleX(0.754);'>0,140 Mbit/s</span>
<span class="t" id="t59" style='left:906px;top:579.3px;font-size:10px;line-height:14px;color:#333;transform:scaleX(0.771);'>CarrierWidth:</span>
<span class="t" id="t60" style='left:958px;top:579.3px;font-size:10px;line-height:14px;color:#1a6a1a;font-weight:bold;transform:scaleX(0.750);'>0,099 MHz</span>
<span class="t" id="t61" style='left:906px;top:625.8px;font-size:10px;line-height:14px;color:#333;transform:scaleX(0.667);'>MIS (0):</span>
<span class="t" id="t62" style='left:960.2px;top:626.1px;font-size:9.5px;line-height:13px;color:#5a5a5a;transform:scaleX(0.800);'>Single</span>
<span class="t" id="t63" style='left:23.7px;top:123.0px;font-size:11px;line-height:15px;color:#c4c4c4;z-index:5;transform:scaleX(0.713);'>PotPlayer</span>
<span class="t" id="t64" style='left:78.8px;top:123.5px;font-size:11px;line-height:15px;color:#4a4a4a;z-index:5;transform:scaleX(0.657);'>MPEG TS</span>
<span class="t" id="t65" style='left:124.8px;top:123.5px;font-size:11px;line-height:15px;color:#dcdcdc;z-index:5;transform:scaleX(0.723);'>127.0.0.1:6969</span>
<span class="t" id="t66" style='left:27.4px;top:547.5px;font-size:28px;line-height:36px;color:#fff;font-weight:bold;z-index:5;transform:scaleX(0.756);'>07:54</span>
<span class="t" id="t67" style='left:42.8px;top:579.6px;font-size:11.5px;line-height:16px;color:#5c5c5c;font-weight:bold;z-index:5;transform:scaleX(0.834);'>08:06</span>
<span class="t" id="t68" style='left:92.6px;top:555.3px;font-size:10.5px;line-height:15px;color:#fff;font-weight:bold;z-index:5;transform:scaleX(0.777);'>127.0.0.1:6969</span>
<span class="t" id="t69" style='left:92px;top:578.5px;font-size:7.5px;line-height:11px;color:#484848;z-index:5;transform:scaleX(0.665);'>PCM</span>
<span class="t" id="t70" style='left:115.2px;top:578.5px;font-size:7.5px;line-height:11px;color:#484848;z-index:5;transform:scaleX(0.731);'>127.6kbps</span>
<span class="t" id="t71" style='left:152.5px;top:578.5px;font-size:7.5px;line-height:11px;color:#484848;z-index:5;transform:scaleX(0.725);'>48khz</span>
<span class="t" id="t72" style='left:157px;top:633.5px;font-size:9px;line-height:13px;color:#dcdcdc;z-index:5;transform:scaleX(0.780);'>00:07:54</span>
<span class="t" id="t73" style='left:187px;top:633.5px;font-size:9px;line-height:13px;color:#444;z-index:5;transform:scaleX(0.833);'>/</span>
<span class="t" id="t74" style='left:194px;top:633.5px;font-size:9px;line-height:13px;color:#484848;z-index:5;transform:scaleX(0.771);'>00:08:06</span>
<span class="t" id="t75" style='left:354.4px;top:581.0px;font-size:7px;line-height:10px;color:#6a6a6a;font-weight:bold;z-index:5;transform:scaleX(0.800);'>A</span>
<span class="t" id="t76" style='left:374.4px;top:581.0px;font-size:7px;line-height:10px;color:#6a6a6a;font-weight:bold;z-index:5;transform:scaleX(0.800);'>B</span>
<span class="t" id="t77" style='left:470.7px;top:127.1px;font-size:9.5px;line-height:13px;color:#c8c8c8;z-index:5;transform:scaleX(0.723);'>Browser</span>
<span class="t" id="t78" style='left:471.5px;top:153.5px;font-size:10.5px;line-height:15px;color:#444;z-index:5;transform:scaleX(0.757);'>Navigovat</span>
<span class="t" id="t79" style='left:519.5px;top:153.5px;font-size:10.5px;line-height:15px;color:#dedede;z-index:5;transform:scaleX(0.729);'>Prohlížeč nabídky</span>
<span class="t" id="t80" style='left:589px;top:153.5px;font-size:10.5px;line-height:15px;color:#4a4a4a;z-index:5;transform:scaleX(0.746);'>Nástroj procházení titu...</span>
<span class="t" id="t81" style='left:484px;top:179.5px;font-size:10px;line-height:14px;color:#bbb;z-index:5;transform:scaleX(0.583);'>..</span>
<span class="t" id="t82" style='left:484px;top:196.1px;font-size:10.5px;line-height:15px;color:#dcdcdc;z-index:5;transform:scaleX(0.708);'>Audio #1 - AAC(LATM), 24.0 kHz (PID:0x0065, PESID:0xc0)</span>
<span class="t" id="t83" style='left:471.8px;top:451.4px;font-size:7px;line-height:10px;color:#c42222;font-weight:bold;font-family:"Liberation Serif", "DejaVu Serif", serif;z-index:5;transform:scaleX(0.970);'>DX</span>
<span class="t" id="t84" style='left:481.6px;top:451.4px;font-size:7px;line-height:10px;color:#22226e;font-weight:bold;font-family:"Liberation Serif", "DejaVu Serif", serif;z-index:5;transform:scaleX(1.007);'>SATCS.COM</span>
<span class="t" id="t85" style='left:413.3px;top:6.0px;font-size:12px;line-height:16px;color:#1c0c00;font-weight:bold;font-style:italic;z-index:9;transform:scaleX(0.807);-webkit-text-stroke:0.6px;'>Berlin-Paris-Vienna-Roma</span>
<span class="t" id="t86" style='left:582px;top:5.5px;font-size:12.5px;line-height:17px;color:#5e0006;font-weight:bold;font-style:italic;z-index:9;transform:scaleX(0.829);-webkit-text-stroke:0.6px;'>Dubai</span>
<span class="t" id="t87" style='left:696.3px;top:5.5px;font-size:12.5px;line-height:17px;color:#042804;font-weight:bold;font-style:italic;z-index:9;transform:scaleX(0.871);-webkit-text-stroke:0.6px;'>Moscow</span>
<span class="t" id="t88" style='left:809px;top:5.5px;font-size:12.5px;line-height:17px;color:#081446;font-weight:bold;font-style:italic;z-index:9;transform:scaleX(0.829);-webkit-text-stroke:0.6px;'>London, Eng</span>
<span class="t" id="t89" style='left:929.5px;top:5.5px;font-size:12.5px;line-height:17px;color:#022626;font-weight:bold;font-style:italic;z-index:9;transform:scaleX(0.853);-webkit-text-stroke:0.6px;'>Cairo-Athens</span>
<span class="t" id="t90" style='left:413.3px;top:28.5px;font-size:12px;line-height:16px;color:#0a0a0a;font-weight:bold;z-index:9;transform:scaleX(0.778);-webkit-text-stroke:0.5px;'>Wed, Apr 10</span>
<span class="t" id="t91" style='left:536px;top:28.5px;font-size:12px;line-height:16px;color:#0a0a0a;font-weight:bold;z-index:9;transform:scaleX(0.778);-webkit-text-stroke:0.5px;'>Wed, Apr 10</span>
<span class="t" id="t92" style='left:658px;top:28.5px;font-size:12px;line-height:16px;color:#0a0a0a;font-weight:bold;z-index:9;transform:scaleX(0.778);-webkit-text-stroke:0.5px;'>Wed, Apr 10</span>
<span class="t" id="t93" style='left:781.5px;top:28.5px;font-size:12px;line-height:16px;color:#0a0a0a;font-weight:bold;z-index:9;transform:scaleX(0.778);-webkit-text-stroke:0.5px;'>Wed, Apr 10</span>
<span class="t" id="t94" style='left:903.5px;top:28.5px;font-size:12px;line-height:16px;color:#0a0a0a;font-weight:bold;z-index:9;transform:scaleX(0.778);-webkit-text-stroke:0.5px;'>Wed, Apr 10</span>
<span class="t" id="t95" style='left:491px;top:28.5px;font-size:12px;line-height:16px;color:#0a0a0a;font-weight:bold;z-index:9;transform:scaleX(0.771);-webkit-text-stroke:0.5px;'>08:22:22</span>
<span class="t" id="t96" style='left:601px;top:25.5px;font-size:7px;line-height:10px;color:#0a0a0a;font-weight:bold;z-index:9;transform:scaleX(0.875);-webkit-text-stroke:0.5px;'>+2</span>
<span class="t" id="t97" style='left:620px;top:28.5px;font-size:12px;line-height:16px;color:#0a0a0a;font-weight:bold;z-index:9;transform:scaleX(0.774);-webkit-text-stroke:0.5px;'>10:22</span>
<span class="t" id="t98" style='left:722.6px;top:25.5px;font-size:7px;line-height:10px;color:#0a0a0a;font-weight:bold;z-index:9;transform:scaleX(0.925);-webkit-text-stroke:0.5px;'>+1</span>
<span class="t" id="t99" style='left:742px;top:28.5px;font-size:12px;line-height:16px;color:#0a0a0a;font-weight:bold;z-index:9;transform:scaleX(0.774);-webkit-text-stroke:0.5px;'>09:22</span>
<span class="t" id="t100" style='left:840.5px;top:33.6px;font-size:8px;line-height:12px;color:#0a0a0a;font-weight:bold;z-index:9;transform:scaleX(0.846);-webkit-text-stroke:0.5px;'>)ST</span>
<span class="t" id="t101" style='left:847.6px;top:25.7px;font-size:7.5px;line-height:11px;color:#0a0a0a;font-weight:bold;z-index:9;transform:scaleX(0.714);-webkit-text-stroke:0.5px;'>-1</span>
<span class="t" id="t102" style='left:858px;top:28.5px;font-size:12px;line-height:16px;color:#0a0a0a;font-weight:bold;z-index:9;transform:scaleX(0.771);-webkit-text-stroke:0.5px;'>07:22:22</span>
<span class="t" id="t103" style='left:987.7px;top:28.5px;font-size:12px;line-height:16px;color:#0a0a0a;font-weight:bold;z-index:9;transform:scaleX(0.758);-webkit-text-stroke:0.5px;'>08:22</span>
<span class="t" id="t104" style='left:414.6px;top:48.0px;font-size:12px;line-height:16px;color:#d6d6d6;font-family:"DejaVu Sans Mono", "Liberation Mono", monospace;z-index:9;transform:scaleX(0.870);'>C:\Users\Roman Dávid&gt;Signal monitoring_PF 450_LC/SK_IS 901-27.5°W_11 688 SPIN 1038_9-10.4.2024+</span>
<div class="a" id="ov" style="left:409px;top:-10px;width:625px;height:86px;background:#000;border-radius:0 0 0 6px;box-shadow:0 3px 14px 0 rgba(0,0,0,.5),0 46px 30px -12px rgba(0,0,0,.16)"></div>
<div class="a" style="left:569px;top:0;width:455px;height:3.5px;background:#222;border-radius:0 0 0 4px"></div>
<div class="a" style="left:411.5px;top:5.5px;width:121.5px;height:16.5px;background:#ff6a12"></div>
<div class="a" style="left:411.5px;top:24px;width:121.5px;height:20.5px;background:linear-gradient(#9c9c9c 0,#e6e6e6 16%,#fff 32%,rgba(255,255,255,0) 33%),repeating-linear-gradient(#fff 0,#fff 2.4px,#ececec 3.2px,#fff 4px)"></div>
<div class="a" style="left:534.5px;top:5.5px;width:120.5px;height:16.5px;background:#ff1416"></div>
<div class="a" style="left:534.5px;top:24px;width:120.5px;height:20.5px;background:linear-gradient(#9c9c9c 0,#e6e6e6 16%,#fff 32%,rgba(255,255,255,0) 33%),repeating-linear-gradient(#fff 0,#fff 2.4px,#ececec 3.2px,#fff 4px)"></div>
<div class="a" style="left:656.5px;top:5.5px;width:120.8px;height:16.5px;background:#1fcf24"></div>
<div class="a" style="left:656.5px;top:24px;width:120.8px;height:20.5px;background:linear-gradient(#9c9c9c 0,#e6e6e6 16%,#fff 32%,rgba(255,255,255,0) 33%),repeating-linear-gradient(#fff 0,#fff 2.4px,#ececec 3.2px,#fff 4px)"></div>
<div class="a" style="left:779px;top:5.5px;width:121.2px;height:16.5px;background:#1f62dc"></div>
<div class="a" style="left:779px;top:24px;width:121.2px;height:20.5px;background:linear-gradient(#9c9c9c 0,#e6e6e6 16%,#fff 32%,rgba(255,255,255,0) 33%),repeating-linear-gradient(#fff 0,#fff 2.4px,#ececec 3.2px,#fff 4px)"></div>
<div class="a" style="left:901.7px;top:5.5px;width:120.6px;height:16.5px;background:#1fcfcd"></div>
<div class="a" style="left:901.7px;top:24px;width:120.6px;height:20.5px;background:linear-gradient(#9c9c9c 0,#e6e6e6 16%,#fff 32%,rgba(255,255,255,0) 33%),repeating-linear-gradient(#fff 0,#fff 2.4px,#ececec 3.2px,#fff 4px)"></div>
</div>
</body></html>
